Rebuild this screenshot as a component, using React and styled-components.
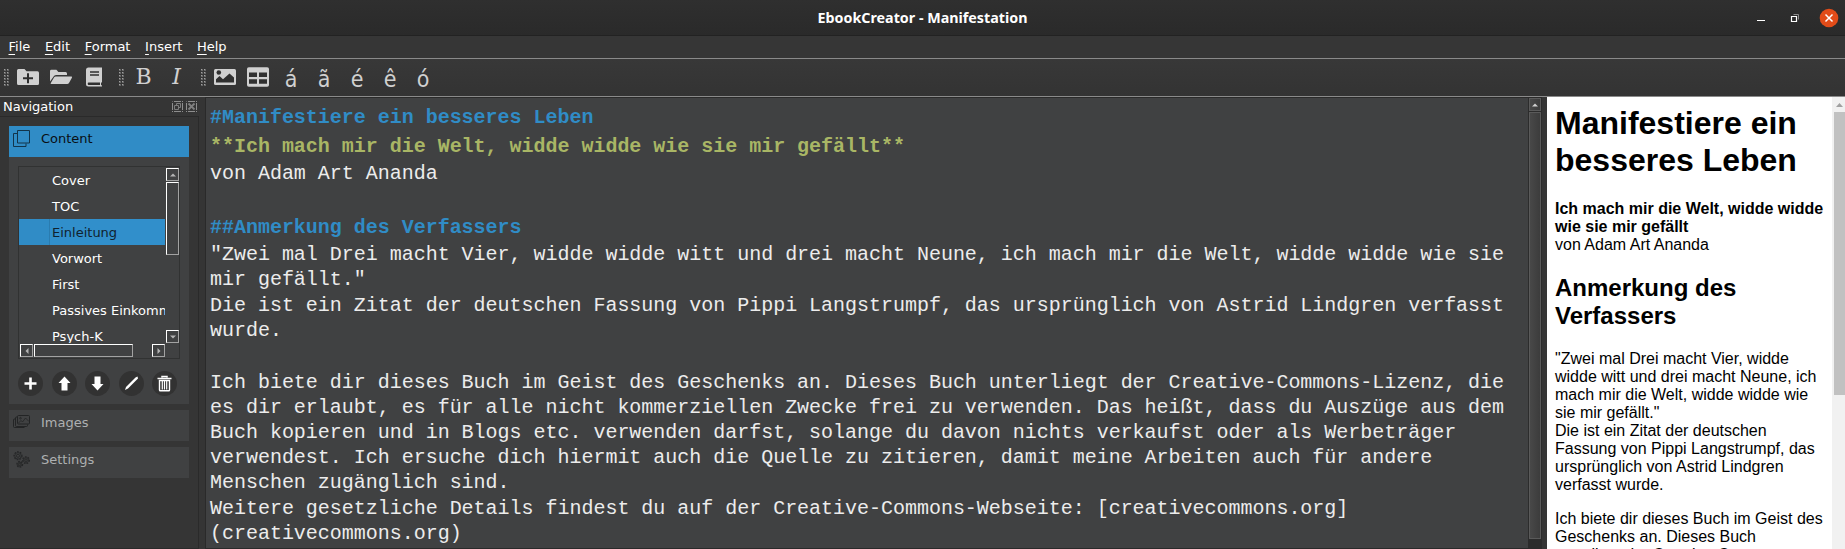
import React from 'react';
import styled, { createGlobalStyle, css } from 'styled-components';

const GlobalStyle = createGlobalStyle`
  * { box-sizing: border-box; }
  html, body, #root { margin: 0; height: 100%; }
  body { overflow: hidden; background: #353535; }
`;

const Window = styled.div`
  width: 1845px;
  height: 549px;
  display: flex;
  flex-direction: column;
  overflow: hidden;
  background: #353535;
  color: #fff;
  font: 13px/16px 'DejaVu Sans', sans-serif;
`;

const TitleBar = styled.header`
  flex: 0 0 36px;
  display: grid;
  grid-template-columns: 1fr auto 1fr;
  align-items: center;
  background: linear-gradient(#2f2f2f, #2a2a2a);
  border-bottom: 1px solid #222;
`;

const Title = styled.h1`
  grid-column: 2;
  margin: 0;
  font: bold 14.3px/20px 'Noto Sans', sans-serif;
`;

const WindowControls = styled.div`
  justify-self: end;
  display: flex;
  align-items: center;
  padding-right: 6px;
`;

const MenuBar = styled.nav`
  flex: 0 0 23px;
  display: flex;
  gap: 14.6px;
  padding: 2px 8px 0 8.5px;
  background: #363636;
  border-bottom: 1px solid #8a8a8a;
`;

const MenuItem = styled.span`
  line-height: 17px;
  &::first-letter {
    text-decoration: underline;
    text-underline-offset: 3px;
    text-decoration-thickness: 1px;
  }
`;

const ToolBar = styled.div`
  flex: 0 0 38px;
  display: flex;
  background: linear-gradient(#383838, #333);
  border-bottom: 1px solid #8a8a8a;
`;

const ToolGroup = styled.div`
  display: flex;
  padding-left: 4px;
  margin-right: ${(p) => p.$after || 0}px;
`;

const Grip = styled.svg`
  width: 6px;
  height: 18px;
  margin: 10px ${(p) => p.$gap}px 0 0;
`;

const ToolButton = styled.button`
  width: 33px;
  height: 36px;
  padding: 6px 0 0;
  border: 0;
  background: none;
  display: flex;
  justify-content: center;
  align-items: flex-start;
  color: #d0d0d0;
  svg { display: block; }
`;

const ToolLetter = styled.span`
  font: ${(p) => (p.$italic ? 'italic ' : '')}${(p) => (p.$serif
    ? "22px/24px 'DejaVu Serif', serif"
    : "23px/24px 'DejaVu Sans Condensed', 'DejaVu Sans', sans-serif")};
  font-stretch: ${(p) => (p.$serif ? 'normal' : 'condensed')};
  margin-top: ${(p) => (p.$serif ? 0 : 2)}px;
`;

const Main = styled.main`
  flex: 1;
  min-height: 0;
  display: flex;
`;

const Dock = styled.aside`
  width: 205px;
  display: flex;
  flex-direction: column;
`;

const DockTitle = styled.div`
  height: 19px;
  display: flex;
  align-items: center;
  gap: 3px;
  padding: 0 8px 0 3px;
  span { flex: 1; }
`;

const DockBody = styled.div`
  flex: 1;
  width: 199px;
  padding: 9px 9px 0;
  border: 1px solid #2a2a2a;
  border-left: 0;
  display: flex;
  flex-direction: column;
  gap: 6px;
`;

const Section = styled.section`
  background: #404142;
`;

const SectionHeader = styled.div`
  height: 31px;
  display: flex;
  gap: 11px;
  padding: 4px 0 0 4px;
  background: ${(p) => (p.$active ? '#308cc6' : '#404142')};
  color: ${(p) => (p.$active ? '#0a0f14' : '#aeb0b1')};
  span { line-height: 17px; }
  svg { display: block; }
`;

const SectionBody = styled.div`
  height: 247px;
  padding: 9px 9px 0;
`;

const ListBox = styled.div`
  height: 193px;
  border: 1px solid #313232;
  display: grid;
  grid-template-columns: 146px 1fr;
  grid-template-rows: 176px 1fr;
`;

const ListItems = styled.div`
  overflow: hidden;
`;

const ListItem = styled.div`
  height: 26px;
  padding-left: 33px;
  line-height: 28px;
  white-space: nowrap;
  ${(p) => p.$selected && css`
    color: #10222e;
    background: linear-gradient(90deg, #308cc6 30px, #2a7cb0 30px, #2a7cb0 31px, #318fcb 31px);
  `}
`;

const ScrollTrack = styled.div`
  display: flex;
  flex-direction: ${(p) => (p.$horizontal ? 'row' : 'column')};
  gap: 1px;
  padding: 1px 0 0 1px;
`;

const bevel = css`
  border: 1px solid #fff;
  border-right-color: #a2a2a2;
  border-bottom-color: #a2a2a2;
`;

const ScrollButton = styled.div`
  flex: none;
  width: 13px;
  height: 13px;
  ${bevel}
  display: flex;
  align-items: center;
  justify-content: center;
  margin-${(p) => p.$push || 'top'}: ${(p) => (p.$push ? 'auto' : 0)};
`;

const ScrollThumb = styled.div`
  flex: none;
  width: ${(p) => p.$w}px;
  height: ${(p) => p.$h}px;
  ${bevel}
`;

const Actions = styled.div`
  display: flex;
  justify-content: space-between;
  padding: 12px 3px 0 0;
`;

const RoundButton = styled.button`
  width: 25px;
  height: 25px;
  padding: 0;
  border: 0;
  border-radius: 50%;
  background: #323232;
  svg { display: block; }
`;

const Editor = styled.div`
  width: 1337px;
  display: flex;
  background: #404142;
  border: 1px solid #2a2a2a;
  border-right: 0;
`;

const EditorText = styled.div`
  flex: 1;
  padding: 7px 0 0 4px;
  font: 20px/25px 'Liberation Mono', monospace;
  letter-spacing: -0.02px;
  color: #ececec;
  white-space: pre;
  overflow: hidden;
`;

const Paragraph = styled.div`
  min-height: 25px;
  margin-bottom: ${(p) => p.$gap ?? 1}px;
  font-weight: ${(p) => (p.$color ? 'bold' : 'normal')};
  color: ${(p) => p.$color || 'inherit'};
`;

const EditorScroll = styled.div`
  width: 14px;
  padding: 0 1px;
  background: #2c2c2c;
  display: flex;
  flex-direction: column;
  gap: 1px;
`;

const EditorScrollPart = styled.div`
  height: ${(p) => p.$h}px;
  border: 1px solid #5a5a5a;
  background: linear-gradient(90deg, #484848, #3c3c3c);
  display: flex;
  align-items: center;
  justify-content: center;
`;

const Preview = styled.div`
  flex: 1;
  margin-left: 5px;
  min-width: 0;
  display: flex;
  background: #fff;
  color: #000;
`;

const Page = styled.article`
  flex: 1;
  padding: 8px 8px 0;
  overflow: hidden;
  font: 16px/18px 'Liberation Sans', sans-serif;
  h1 { margin: 0 0 21px; font-size: 32px; line-height: 37px; }
  h2 { margin: 20px 0; font-size: 24px; line-height: 28px; }
  p { margin: 0 0 16px; }
`;

const PreviewScroll = styled.div`
  width: 13px;
  background: #f1f1f1;
  padding-left: 2px;
  overflow: hidden;
  svg { display: block; }
`;

const PreviewThumb = styled.div`
  height: 283px;
  background: #c1c1c1;
`;

const arrows = {
  up: 'M1 5.5h6L4 2.5z',
  down: 'M1 2.5h6L4 5.5z',
  left: 'M5.5 1v6L2.5 4z',
  right: 'M2.5 1v6L5.5 4z',
};

const Arrow = ({ dir, size = 8, color = '#b4b4b4' }) => (
  <svg width={size} height={size} viewBox="0 0 8 8"><path d={arrows[dir]} fill={color} /></svg>
);

const Handle = ({ gap }) => (
  <Grip $gap={gap} viewBox="0 0 6 18">
    {[0, 3].map((x) => [0, 3, 6, 9, 12, 15].map((y) => (
      <g key={`${x}-${y}`}>
        <rect x={x} y={y} width="2" height="2" fill="#666" />
        <rect x={x} y={y} width="1" height="1" fill="#a0a0a0" />
      </g>
    )))}
  </Grip>
);

const toolIcons = {
  newProject: (
    <>
      <path d="M2.5 4h6l2 2.3h11Q23 6.3 23 8v10.5Q23 20 21.5 20h-19Q1 20 1 18.5V5.5Q1 4 2.5 4z" fill="currentColor" />
      <path d="M12 8.3v10M7 13.3h10" stroke="#2d2d2d" strokeWidth="2" />
    </>
  ),
  open: (
    <>
      <path d="M1 16.5V6.200Q1 4.8 2.4 4.8h5l2 2.200h7.200Q18 7 18 8.5V10H7.5Q5.8 10 5 11z" fill="currentColor" />
      <path d="M6.8 11.5H22.2Q23.6 11.5 22.9 12.7L20 18Q19.4 19 18.2 19H2.3Q1.1 19 1.8 17.9L5 12.6Q5.6 11.5 6.8 11.5z" fill="currentColor" />
    </>
  ),
  book: (
    <>
      <path d="M6.5 2.5H20V17.5h-1v2.8h1V21.5H6.5Q4 21.5 4 19V5Q4 2.5 6.5 2.5z" fill="currentColor" />
      <path d="M8 7h9M8 10h9" stroke="#303030" strokeWidth="1.5" />
      <path d="M6.7 17.5H18v2.5H6.7Q5.7 20 5.7 18.7T6.7 17.5z" fill="#303030" />
    </>
  ),
  image: (
    <>
      <path d="M2.5 4h19Q23 4 23 5.5v13Q23 20 21.5 20h-19Q1 20 1 18.5v-13Q1 4 2.5 4z" fill="currentColor" />
      <circle cx="5.8" cy="7.5" r="2.3" fill="#303030" />
      <path d="M3 17.5v-3.3L6.5 11l3.5 3.3L16.5 8.5 21 12.5v5z" fill="#303030" />
    </>
  ),
  table: (
    <>
      <rect x="1" y="2.3" width="22" height="19.4" rx="1.8" fill="currentColor" />
      <path d="M3 7.5h8v4.5H3zM13 7.5h8v4.5h-8zM3 14.3h8v4.5H3zM13 14.3h8v4.5h-8z" fill="#303030" />
    </>
  ),
};

const ToolIcon = ({ name }) => (
  <ToolButton><svg width="24" height="24" viewBox="0 0 24 24">{toolIcons[name]}</svg></ToolButton>
);

const PagesIcon = () => (
  <svg width="17" height="17" viewBox="0 0 17 17" fill="none" stroke="#12344a">
    <path d="M4.5.5h12v12.5h-12zM4 3.5H.5v13h12.5V13.5" />
  </svg>
);

const ImagesIcon = () => (
  <svg width="17" height="17" viewBox="0 0 17 17" fill="none" stroke="#232425">
    <path d="M5.500 1.500h10q1 0 1 1v6.500q0 1-1 1h-10q-1 0-1-1V2.500q0-1 1-1z" />
    <path d="M4.500 3H3.500q-1 0-1 1v7.500q0 1 1 1h10q1 0 1-1V10.500M2.500 5H1.500q-1 0-1 1v6.500q0 1 1 1h10" />
    <path d="M5.500 9 8 6.500l1.500 1.500 3-4 3.500 3.500" strokeWidth=".8" />
    <circle cx="7.500" cy="4.200" r=".8" strokeWidth=".8" />
  </svg>
);

const Gear = ({ x, y, r }) => (
  <g>
    <circle cx={x} cy={y} r={r} strokeWidth="1.1" strokeDasharray="1.7 1.2" />
    <circle cx={x} cy={y} r={r - 0.8} strokeWidth=".7" />
    <circle cx={x} cy={y} r={r / 2.6} strokeWidth=".8" />
  </g>
);

const GearsIcon = () => (
  <svg width="17" height="17" viewBox="0 0 17 17" fill="none" stroke="#232425">
    <Gear x={5} y={4.8} r={4} />
    <Gear x={13} y={9.2} r={3.4} />
    <Gear x={6.8} y={13.3} r={2.9} />
  </svg>
);

const actionIcons = {
  add: <path d="M12.5 6.5v12M6.5 12.5h12" stroke="#fff" strokeWidth="2.6" />,
  up: <path d="M12.5 5.5 18.5 12H15.5v7.5h-6V12H6.5z" fill="#fff" />,
  down: <path d="M12.5 19.5 18.5 13H15.5V5.5h-6V13H6.5z" fill="#fff" />,
  edit: <path d="M6 19l1-3L16.5 6.500 18.500 5.5 19 7.5 9 17.5z" fill="#fff" />,
  remove: (
    <>
      <path d="M5.5 7.5h14M10 6.500V5.5h5v1" stroke="#fff" strokeWidth="1.5" fill="none" />
      <path d="M7.5 9.5v9.5q0 .8.8.8h8.400q.8 0 .8-.8V9.5z" fill="none" stroke="#fff" strokeWidth="1.4" />
      <path d="M10.3 10v8.5M12.5 10v8.5M14.7 10v8.5" stroke="#fff" strokeWidth="1.2" />
    </>
  ),
};

const DockFrame = () => (
  <path d="M2 .5h7M2 10.5h7M.5 2v7M10.5 2v7M.5.500h.5M10 .5h1M0 10.500h1M10 10.500h1" />
);

const chapters = ['Cover', 'TOC', 'Einleitung', 'Vorwort', 'First', 'Passives Einkommen', 'Psych-K'];

const paragraphs = [
  { color: '#308cc6', gap: 4, text: '#Manifestiere ein besseres Leben' },
  { color: '#a9b665', gap: 2, text: '**Ich mach mir die Welt, widde widde wie sie mir gefällt**' },
  { gap: 2, text: 'von Adam Art Ananda' },
  { gap: 2, text: '' },
  { color: '#308cc6', gap: 2, text: '##Anmerkung des Verfassers' },
  { text: '"Zwei mal Drei macht Vier, widde widde witt und drei macht Neune, ich mach mir die Welt, widde widde wie sie\nmir gefällt."' },
  { text: 'Die ist ein Zitat der deutschen Fassung von Pippi Langstrumpf, das ursprünglich von Astrid Lindgren verfasst\nwurde.' },
  { text: '' },
  { text: 'Ich biete dir dieses Buch im Geist des Geschenks an. Dieses Buch unterliegt der Creative-Commons-Lizenz, die\nes dir erlaubt, es für alle nicht kommerziellen Zwecke frei zu verwenden. Das heißt, dass du Auszüge aus dem\nBuch kopieren und in Blogs etc. verwenden darfst, solange du davon nichts verkaufst oder als Werbeträger\nverwendest. Ich ersuche dich hiermit auch die Quelle zu zitieren, damit meine Arbeiten auch für andere\nMenschen zugänglich sind.' },
  { text: 'Weitere gesetzliche Details findest du auf der Creative-Commons-Webseite: [creativecommons.org]\n(creativecommons.org)' },
];

export default function App() {
  return (
    <Window>
      <GlobalStyle />
      <TitleBar>
        <Title>EbookCreator - Manifestation</Title>
        <WindowControls>
          <svg width="84" height="20" viewBox="0 0 84 20">
            <path d="M2 12.5h8" stroke="#fff" />
            <path d="M38.500 6.500h5v5" fill="none" stroke="#8c8c8c" />
            <path d="M36.500 8.500h5v5h-5z" fill="none" stroke="#fff" strokeWidth="1.2" />
            <circle cx="74" cy="10" r="9.3" fill="#e24c19" />
            <path d="M70.500 6.500l7 7M77.500 6.500l-7 7" stroke="#fff" strokeWidth="1.5" />
          </svg>
        </WindowControls>
      </TitleBar>
      <MenuBar>
        {['File', 'Edit', 'Format', 'Insert', 'Help'].map((m) => <MenuItem key={m}>{m}</MenuItem>)}
      </MenuBar>
      <ToolBar>
        <ToolGroup $after={4.5}>
          <Handle gap={1.5} />
          <ToolIcon name="newProject" />
          <ToolIcon name="open" />
          <ToolIcon name="book" />
        </ToolGroup>
        <ToolGroup $after={4}>
          <Handle gap={2} />
          <ToolButton><ToolLetter $serif>B</ToolLetter></ToolButton>
          <ToolButton><ToolLetter $serif $italic>I</ToolLetter></ToolButton>
        </ToolGroup>
        <ToolGroup>
          <Handle gap={1.5} />
          <ToolIcon name="image" />
          <ToolIcon name="table" />
          {['á', 'ã', 'é', 'ê', 'ó'].map((c) => <ToolButton key={c}><ToolLetter>{c}</ToolLetter></ToolButton>)}
        </ToolGroup>
      </ToolBar>
      <Main>
        <Dock>
          <DockTitle>
            <span>Navigation</span>
            <svg width="11" height="11" viewBox="0 0 11 11" fill="none" stroke="#8e8e8e">
              <DockFrame />
              <path d="M4.500 4V2.500h4v4H7M2.500 4.500h4v4h-4z" stroke="#7c7c7c" />
            </svg>
            <svg width="11" height="11" viewBox="0 0 11 11" fill="none" stroke="#8e8e8e">
              <DockFrame />
              <path d="M2.500 2.500l6 6M8.500 2.500l-6 6" stroke="#808080" strokeWidth="1.800" />
            </svg>
          </DockTitle>
          <DockBody>
            <Section>
              <SectionHeader $active><PagesIcon /><span>Content</span></SectionHeader>
              <SectionBody>
                <ListBox>
                  <ListItems>
                    {chapters.map((c) => <ListItem key={c} $selected={c === 'Einleitung'}>{c}</ListItem>)}
                  </ListItems>
                  <ScrollTrack>
                    <ScrollButton><Arrow dir="up" /></ScrollButton>
                    <ScrollThumb $w={13} $h={73} />
                    <ScrollButton $push="top"><Arrow dir="down" /></ScrollButton>
                  </ScrollTrack>
                  <ScrollTrack $horizontal>
                    <ScrollButton><Arrow dir="left" /></ScrollButton>
                    <ScrollThumb $w={99} $h={13} />
                    <ScrollButton $push="left"><Arrow dir="right" /></ScrollButton>
                  </ScrollTrack>
                </ListBox>
                <Actions>
                  {Object.keys(actionIcons).map((k) => (
                    <RoundButton key={k}><svg width="25" height="25" viewBox="0 0 25 25">{actionIcons[k]}</svg></RoundButton>
                  ))}
                </Actions>
              </SectionBody>
            </Section>
            <Section><SectionHeader><ImagesIcon /><span>Images</span></SectionHeader></Section>
            <Section><SectionHeader><GearsIcon /><span>Settings</span></SectionHeader></Section>
          </DockBody>
        </Dock>
        <Editor>
          <EditorText>
            {paragraphs.map((p, i) => <Paragraph key={i} $color={p.color} $gap={p.gap}>{p.text}</Paragraph>)}
          </EditorText>
          <EditorScroll>
            <EditorScrollPart $h={13}><Arrow dir="up" color="#d0d0d0" /></EditorScrollPart>
            <EditorScrollPart $h={427} />
          </EditorScroll>
        </Editor>
        <Preview>
          <Page>
            <h1>Manifestiere ein besseres Leben</h1>
            <p><b>Ich mach mir die Welt, widde widde wie sie mir gefällt</b><br />von Adam Art Ananda</p>
            <h2>Anmerkung des Verfassers</h2>
            <p>"Zwei mal Drei macht Vier, widde widde witt und drei macht Neune, ich mach mir die Welt, widde widde wie sie mir gefällt."<br />Die ist ein Zitat der deutschen Fassung von Pippi Langstrumpf, das ursprünglich von Astrid Lindgren verfasst wurde.</p>
            <p>Ich biete dir dieses Buch im Geist des Geschenks an. Dieses Buch unterliegt der Creative-Commons-Lizenz, die es dir erlaubt.</p>
          </Page>
          <PreviewScroll>
            <svg width="11" height="15" viewBox="0 0 11 15"><path d="M2 10h7L5.5 6z" fill="#a0a0a0" /></svg>
            <PreviewThumb />
          </PreviewScroll>
        </Preview>
      </Main>
    </Window>
  );
}
